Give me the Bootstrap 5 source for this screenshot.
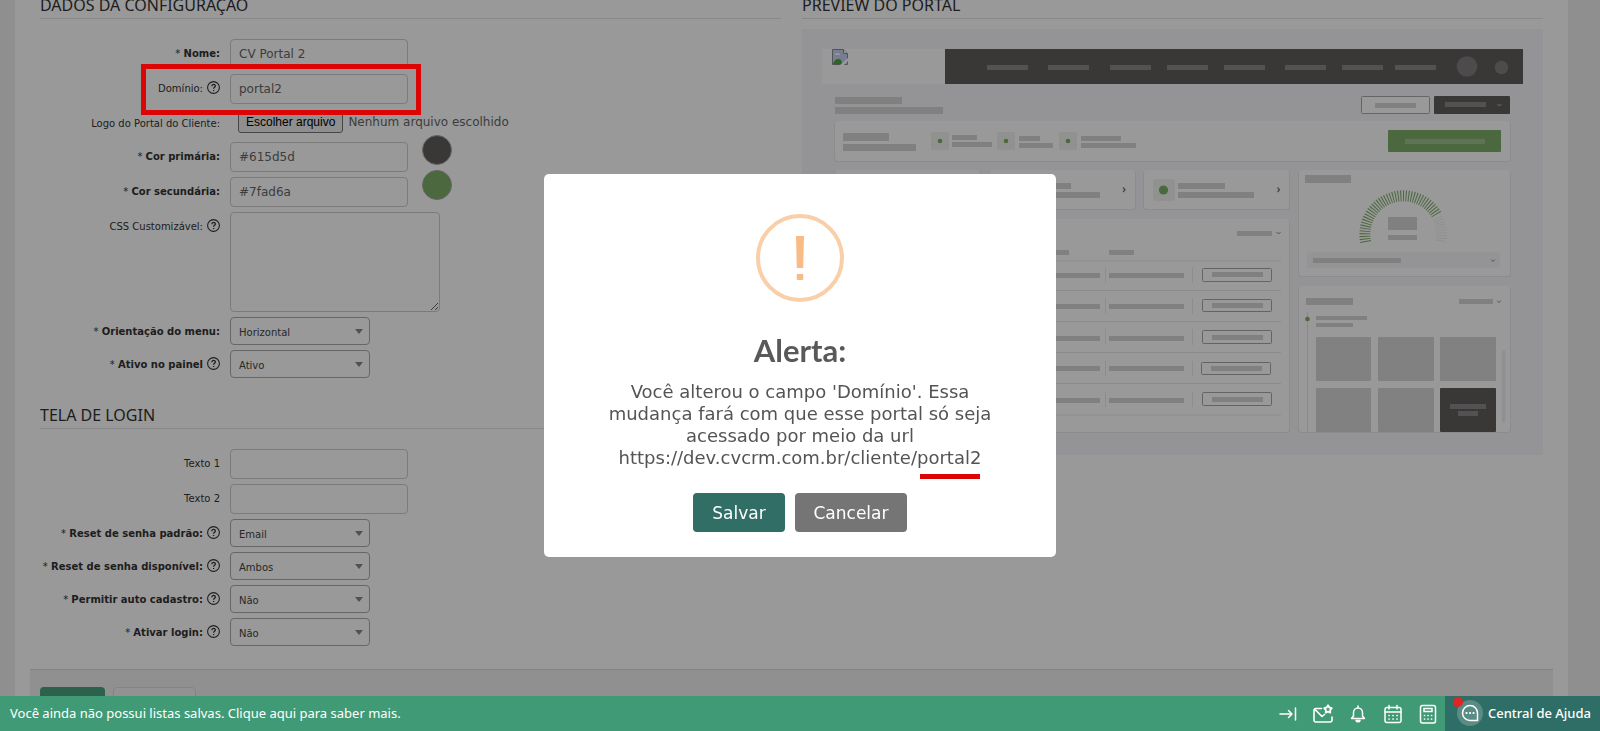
<!DOCTYPE html>
<html lang="pt-BR">
<head>
<meta charset="utf-8">
<meta name="viewport" content="width=device-width, initial-scale=1">
<title>Configuração do portal</title>
<link href="https://cdn.jsdelivr.net/npm/bootstrap@5.3.0/dist/css/bootstrap.min.css" rel="stylesheet">
<style>
  body { font-family: "DejaVu Sans", Verdana, sans-serif; font-size: 10px; line-height: 14px; color: #333; background: #efefef; overflow: hidden; }
  .sheet { background: #fff; margin: 0 32px 0 15px; }
  .sheet-body { padding: 0 25px; }
  .sheet-body > .row { --bs-gutter-x: 21px; }
  .section-title { font-family: "Noto Sans", Tahoma, sans-serif; font-size: 16px; font-weight: 400; line-height: 10px; padding-bottom: 8px; border-bottom: 1px solid #e3e3e3; margin: 0 0 20px; white-space: nowrap; }
  .section-gap { margin-top: 32px; }
  .field { display: flex; align-items: flex-start; gap: 10px; margin-bottom: 5px; position: relative; }
  .field-label { width: 180px; padding-top: 8px; text-align: right; white-space: nowrap; display: flex; justify-content: flex-end; gap: 4px; }
  .field-label b { font-weight: 700; }
  .help { width: 13px; height: 13px; flex: none; color: #333; margin-top: -1px; }
  .field .form-control { width: 178px; height: 30px; padding: 0 8px; font-size: 12px; line-height: 18px; color: #666; background: transparent; border: 1px solid #cdcdcd; border-radius: 4px; }
  .field textarea.form-control { width: 210px; height: 100px; resize: both; }
  .field .form-select { width: 140px; height: 28px; padding: 3px 24px 0 8px; font-size: 10px; line-height: 14px; color: #444; border: 1px solid #aaa; border-radius: 4px;
    background: url("data:image/svg+xml,%3Csvg xmlns='http://www.w3.org/2000/svg' viewBox='0 0 8 5'%3E%3Cpath fill='%23888' d='M0 0h8L4 5z'/%3E%3C/svg%3E") no-repeat right 6px center / 8px 5px; }
  .swatch { width: 30px; height: 30px; border-radius: 50%; border: 1px solid #aaa; margin: -7px 0 0 4px; padding: 0; }
  .file-row { height: 28px; }
  .file-pick { display: flex; align-items: center; gap: 5px; height: 22px; margin: 2px 0 0 8px; font-size: 12px; color: #666; white-space: nowrap; }
  .file-btn { font-family: "Liberation Sans", Arial, sans-serif; font-size: 12px; line-height: 19px; color: #000; background: #efefef; border: 1px solid #767676; border-radius: 3px; padding: 0 7px; }
  .callout-box { position: absolute; left: 101px; top: -10px; width: 280px; height: 51px; border: 5px solid #dc0505; z-index: 1070; }
  .preview { margin-top: 10px; display: block; width: 100%; height: auto; }
  .actions { background: #f1f1f1; border-top: 1px solid #d8d8d8; margin: 23px 15px 0; padding: 17px 10px 0; gap: 8px; flex: 1 0 auto; }
  .actions .btn { height: 32px; font-size: 12px; padding: 0; border-radius: 4px; }
  .btn-keep { width: 65px; background: #4aa37d; color: #fff; }
  .btn-back { width: 83px; background: #f4f4f4; border-color: #ddd; color: #666; }
  .modal-backdrop { --bs-backdrop-opacity: .4; }
  .modal-dialog { --bs-modal-width: 512px; }
  .modal-content { border: 0; border-radius: 5px; padding: 40px 56px 25px; align-items: center; color: #545454; text-align: center; }
  .alert-ring { width: 88px; height: 88px; border: 4px solid #facea8; border-radius: 50%; color: #f8bb86; }
  .alert-title { font-family: Lato, sans-serif; font-size: 31px; font-weight: 700; line-height: 36px; color: #595959; margin: 30px 0 13px; }
  .alert-text { font-size: 18px; line-height: 22px; margin: 0; }
  .marked { position: relative; }
  .marked::after { content: ""; position: absolute; left: 3px; bottom: -11px; width: 60px; height: 5px; background: #dc0505; }
  .alert-actions { gap: 10px; margin-top: 24px; }
  .alert-actions .btn { height: 39px; font-size: 17px; line-height: 24px; color: #fff; border: 0; border-radius: 4px; padding: 1px 0 0; }
  .btn-save { width: 92px; background: #306e66; }
  .btn-cancel { width: 112px; background: #757575; }
  .statusbar { z-index: 1080; height: 35px; background: #419a76; font-family: "Noto Sans", Tahoma, sans-serif; font-size: 13px; line-height: 18px; }
  .statusbar a { color: #fff; text-decoration: none; }
  .status-note { padding: 0 0 1px 10px; }
  .tools { gap: 15px; padding-right: 7px; }
  .tools button { border: 0; background: none; padding: 0; color: #fff; width: 20px; height: 20px; line-height: 0; }
  .help-center { width: 155px; background: #2f6e66; padding: 0 0 1px 12px; gap: 5px; font-weight: 500; }
  .chat { width: 26px; height: 26px; border-radius: 50%; background: #5a8b85; position: relative; }
  .chat i { position: absolute; left: -4px; top: -3px; width: 10px; height: 10px; border-radius: 50%; background: #e12424; }
</style>
</head>
<body>
<svg class="d-none" aria-hidden="true">
  <symbol id="q" viewBox="0 0 13 13"><circle cx="6.500" cy="6.500" r="5.900" fill="none" stroke="currentColor" stroke-width="1.100"/><path d="M4.800 5.200c0-2.300 3.500-2.300 3.500-.2 0 1.200-1.700 1.300-1.700 2.700M6.600 8.900v1.200" fill="none" stroke="currentColor" stroke-width="1.300"/></symbol>
  <symbol id="down" viewBox="0 0 5 4"><path d="M.5 1l2 2 2-2" fill="none" stroke="currentColor" stroke-width="1"/></symbol>
</svg>

<div class="d-flex flex-column vh-100">
<main class="sheet d-flex flex-column flex-grow-1">
  <div class="sheet-body">
    <div class="row">
      <form class="col-6">
        <h2 class="section-title">DADOS DA CONFIGURAÇÃO</h2>
        <div class="field"><label class="field-label" for="nome"><span>* <b>Nome:</b></span></label><input class="form-control" id="nome" type="text" value="CV Portal 2"></div>
        <div class="field"><label class="field-label" for="dominio"><span>Domínio:</span><svg class="help"><use href="#q"/></svg></label><input class="form-control" id="dominio" type="text" value="portal2"><span class="callout-box"></span></div>
        <div class="field file-row"><label class="field-label" for="logo">Logo do Portal do Cliente:</label><input class="visually-hidden" id="logo" type="file"><label class="file-pick" for="logo"><span class="file-btn">Escolher arquivo</span><span>Nenhum arquivo escolhido</span></label></div>
        <div class="field"><label class="field-label" for="cor1"><span>* <b>Cor primária:</b></span></label><input class="form-control" id="cor1" type="text" value="#615d5d"><button class="swatch" type="button" aria-label="Cor primária" style="background:#615d5d"></button></div>
        <div class="field"><label class="field-label" for="cor2"><span>* <b>Cor secundária:</b></span></label><input class="form-control" id="cor2" type="text" value="#7fad6a"><button class="swatch" type="button" aria-label="Cor secundária" style="background:#7fad6a"></button></div>
        <div class="field"><label class="field-label" for="css"><span>CSS Customizável:</span><svg class="help"><use href="#q"/></svg></label><textarea class="form-control" id="css"></textarea></div>
        <div class="field"><label class="field-label" for="menu"><span>* <b>Orientação do menu:</b></span></label><select class="form-select" id="menu"><option>Horizontal</option><option>Vertical</option></select></div>
        <div class="field mb-0"><label class="field-label" for="ativo"><span>* <b>Ativo no painel</b></span><svg class="help"><use href="#q"/></svg></label><select class="form-select" id="ativo"><option>Ativo</option><option>Inativo</option></select></div>

        <h2 class="section-title section-gap">TELA DE LOGIN</h2>
        <div class="field"><label class="field-label" for="t1">Texto 1</label><input class="form-control" id="t1" type="text"></div>
        <div class="field"><label class="field-label" for="t2">Texto 2</label><input class="form-control" id="t2" type="text"></div>
        <div class="field"><label class="field-label" for="reset"><span>* <b>Reset de senha padrão:</b></span><svg class="help"><use href="#q"/></svg></label><select class="form-select" id="reset"><option>Email</option></select></div>
        <div class="field"><label class="field-label" for="disp"><span>* <b>Reset de senha disponível:</b></span><svg class="help"><use href="#q"/></svg></label><select class="form-select" id="disp"><option>Ambos</option></select></div>
        <div class="field"><label class="field-label" for="auto"><span>* <b>Permitir auto cadastro:</b></span><svg class="help"><use href="#q"/></svg></label><select class="form-select" id="auto"><option>Não</option><option>Sim</option></select></div>
        <div class="field mb-0"><label class="field-label" for="login"><span>* <b>Ativar login:</b></span><svg class="help"><use href="#q"/></svg></label><select class="form-select" id="login"><option>Não</option><option>Sim</option></select></div>
      </form>

      <section class="col-6">
        <h2 class="section-title mb-0">PREVIEW DO PORTAL</h2>
        <svg class="preview" viewBox="802 29 741 426" role="img" aria-label="Preview do portal">
          <rect x="802" y="29" width="741" height="426" fill="#f7f7fa"/>
          <!-- header -->
          <rect x="822" y="49" width="123" height="35" fill="#fff"/>
          <g transform="translate(832 49)"><path d="M.5.5h11l4 4v11H.5z" fill="#c4d3f4" stroke="#8c8c8c"/><path d="M11.500.5v4h4" fill="#fff" stroke="#8c8c8c"/><path d="M3 6c0-2 2-2.500 3-1.500C8 4 8.500 6 8 6z" fill="#fff"/><path d="M1 15c1-4 4-5.500 6-5s3 2 3 5z" fill="#4ba83a"/><path d="M8 16l8-7v3l-4 4z" fill="#fff"/></g>
          <rect x="945" y="49" width="578" height="35" fill="#615d5d"/>
          <g fill="#8a8788"><path d="M987 65h41v5h-41zM1048 65h41v5h-41zM1110 65h41v5h-41zM1167 65h41v5h-41zM1224 65h41v5h-41zM1285 65h41v5h-41zM1342 65h41v5h-41zM1395 65h41v5h-41z"/><circle cx="1467" cy="66.500" r="10.300" opacity=".8"/><circle cx="1501.500" cy="67.500" r="6.700" opacity=".8"/></g>
          <!-- title line -->
          <path d="M835 97h67v7h-67zM835 107h108v7h-108z" fill="#d6d6d6"/>
          <rect x="1361.500" y="96.500" width="68" height="17" rx="1" fill="#fff" stroke="#aaa8a8"/><rect x="1375" y="103" width="41" height="5" fill="#d6d6d6"/>
          <rect x="1434" y="96" width="76" height="18" rx="1" fill="#615d5d"/><rect x="1445" y="102" width="41" height="5" fill="#8a8788"/><use href="#down" x="1497" y="103" width="5" height="4" color="#bbb"/>
          <!-- cards -->
          <g fill="#e9e9ee"><rect x="834" y="122" width="677" height="40" rx="3"/><rect x="834" y="171" width="147" height="39" rx="3"/><rect x="989" y="171" width="147" height="39" rx="3"/><rect x="1143" y="171" width="147" height="39" rx="3"/><rect x="834" y="220" width="456" height="213" rx="3"/><rect x="1298" y="171" width="213" height="106" rx="3"/><rect x="1298" y="287" width="213" height="146" rx="3"/></g>
          <g fill="#fff"><rect x="835" y="121" width="675" height="40" rx="3"/><rect x="835" y="170" width="145" height="39" rx="3"/><rect x="990" y="170" width="145" height="39" rx="3"/><rect x="1144" y="170" width="145" height="39" rx="3"/><rect x="835" y="219" width="454" height="213" rx="3"/><rect x="1299" y="170" width="211" height="106" rx="3"/><rect x="1299" y="286" width="211" height="146" rx="3"/></g>
          <!-- summary card -->
          <path d="M843 133h46v8h-46zM843 144h73v7h-73zM952 135h25v5h-25zM952 142h40v5h-40zM1019 136h21v5h-21zM1019 143h34v5h-34zM1081 136h40v5h-40zM1081 143h55v5h-55z" fill="#d6d6d6"/>
          <g fill="#f1f4ef"><rect x="931" y="132" width="18" height="18" rx="2"/><rect x="997" y="132" width="18" height="18" rx="2"/><rect x="1059" y="132" width="18" height="18" rx="2"/><rect x="999" y="179" width="22" height="22" rx="2"/><rect x="1153" y="179" width="22" height="22" rx="2"/></g>
          <g fill="#7fad6a"><circle cx="940" cy="141" r="2.300"/><circle cx="1006" cy="141" r="2.300"/><circle cx="1068" cy="141" r="2.300"/><circle cx="1163.500" cy="190" r="4.600"/><rect x="1388" y="130" width="113" height="22" rx="1"/></g>
          <rect x="1405" y="139" width="80" height="5" fill="#9fc28f"/>
          <!-- shortcuts -->
          <path d="M1024 183h47v6h-47zM1024 192h76v6h-76zM1178 183h47v6h-47zM1178 192h76v6h-76z" fill="#d6d6d6"/>
          <path d="M1123 187.500l2 2.300-2 2.300M1277.500 187.500l2 2.300-2 2.300" fill="none" stroke="#777" stroke-width="1.300"/>
          <!-- table -->
          <path d="M1237 231h35v5h-35zM1044 250h25v5h-25zM1109 250h25v5h-25z" fill="#d6d6d6"/><use href="#down" x="1276" y="231" width="5" height="4" color="#888"/>
          <path d="M845 261h436M845 290.500h436M845 321.500h436M845 352.500h436M845 383.500h436M845 415h436" stroke="#eaeaea"/>
          <path d="M1105.500 267v16m0 15v16m0 15v16m0 16v15m0 16v15M1192.500 267v16m0 15v16m0 15v16m0 16v15m0 16v15" stroke="#ececec"/>
          <path d="M1025 273h75v5h-75zM1109 273h75v5h-75zM1025 304h75v5h-75zM1109 304h75v5h-75zM1025 336h75v5h-75zM1109 336h75v5h-75zM1025 366h75v5h-75zM1109 366h75v5h-75zM1025 398h75v5h-75zM1109 398h75v5h-75zM1212 272h51v5h-51zM1212 303h51v5h-51zM1212 335h51v5h-51zM1211 366h51v5h-51zM1212 397h51v5h-51z" fill="#d6d6d6"/>
          <g fill="none" stroke="#a8a6a6"><rect x="1202.500" y="268.500" width="69" height="13" rx="1"/><rect x="1202.500" y="299.500" width="69" height="12" rx="1"/><rect x="1202.500" y="330.500" width="69" height="13" rx="1"/><rect x="1201.500" y="362.500" width="69" height="12" rx="1"/><rect x="1202.500" y="392.500" width="69" height="13" rx="1"/></g>
          <!-- gauge -->
          <path d="M1305 175h46v8h-46zM1388 217h29v13h-29zM1388 235h29v5h-29z" fill="#d6d6d6"/>
          <path d="M1365.700 242A38.500 38.500 0 0 1 1437 215.500" fill="none" stroke="#7fad6a" stroke-width="11" stroke-dasharray="1 1.600"/>
          <path d="M1437.500 217.500A38.500 38.500 0 0 1 1441 242" fill="none" stroke="#f0f0f0" stroke-width="11" stroke-dasharray="1 1.600"/>
          <rect x="1307" y="252.500" width="193" height="15.500" rx="2" fill="#f7f7fa"/><rect x="1313" y="258" width="88" height="5" fill="#d6d6d6"/><use href="#down" x="1490.500" y="258.500" width="5" height="4" color="#888"/>
          <!-- gallery -->
          <path d="M1307.500 312v120" stroke="#e6e6e6"/><circle cx="1307.500" cy="319" r="2.300" fill="#7fad6a"/>
          <path d="M1306 298h47v7h-47zM1459 299h34v5h-34zM1316 316h51v4h-51zM1316 323h37v4h-37z" fill="#d6d6d6"/><use href="#down" x="1496.500" y="299.500" width="5" height="4" color="#888"/>
          <g fill="#d8d8d8"><rect x="1316" y="337" width="55" height="44" rx="1"/><rect x="1378" y="337" width="56" height="44" rx="1"/><rect x="1440" y="337" width="56" height="44" rx="1"/><rect x="1316" y="388" width="55" height="44" rx="1"/><rect x="1378" y="388" width="56" height="44" rx="1"/></g>
          <rect x="1440" y="388" width="56" height="44" rx="1" fill="#615d5d"/><path d="M1450 404h36v5h-36zM1458 411h20v5h-20z" fill="#8a8788"/>
          <rect x="1502" y="350" width="3.500" height="73" rx="1.700" fill="#f1f1f6"/>
        </svg>
      </section>
    </div>
  </div>
  <div class="actions d-flex align-items-start">
    <button class="btn btn-keep" type="button" aria-label="Salvar"></button>
    <button class="btn btn-back" type="button" aria-label="Cancelar"></button>
  </div>
</main>
</div>

<div class="modal-backdrop show"></div>
<div class="modal d-block" role="dialog" aria-labelledby="alerta">
  <div class="modal-dialog modal-dialog-centered">
    <div class="modal-content">
      <div class="alert-ring d-flex align-items-center justify-content-center">
        <svg width="8" height="44" viewBox="0 0 8 44" fill="currentColor"><path d="M0 0h8l-.8 32H.8zM.8 38h6.400v6H.8z"/></svg>
      </div>
      <h1 class="alert-title" id="alerta">Alerta:</h1>
      <p class="alert-text">Você alterou o campo 'Domínio'. Essa mudança fará com que esse portal só seja acessado por meio da url https://dev.cvcrm.com.br/cliente/<span class="marked">portal2</span></p>
      <div class="alert-actions d-flex">
        <button class="btn btn-save" type="button">Salvar</button>
        <button class="btn btn-cancel" type="button">Cancelar</button>
      </div>
    </div>
  </div>
</div>

<footer class="statusbar fixed-bottom d-flex align-items-stretch">
  <a class="status-note d-flex align-items-center me-auto" href="#">Você ainda não possui listas salvas. Clique aqui para saber mais.</a>
  <div class="tools d-flex align-items-center">
    <button type="button" aria-label="Recolher"><svg width="20" height="20" viewBox="0 0 20 20" fill="none" stroke="currentColor" stroke-width="1.500" stroke-linecap="round" stroke-linejoin="round"><path d="M2 10h12M10.500 6.500L14 10l-3.500 3.500M17.500 4v12"/></svg></button>
    <button type="button" aria-label="Mensagens"><svg width="20" height="20" viewBox="0 0 20 20" fill="none" stroke="currentColor" stroke-width="1.600" stroke-linecap="round" stroke-linejoin="round"><path d="M8.500 4.500H3a2 2 0 0 0-2 2V16a2 2 0 0 0 2 2h14a2 2 0 0 0 2-2v-3M1.500 5l7.500 7.500 2.500-2"/><path d="M15 1.300l1.300 2.200 2.500.6-1.700 2 .2 2.600-2.300-1-2.300 1 .2-2.600-1.700-2 2.500-.6z" stroke-width="1.800"/></svg></button>
    <button type="button" aria-label="Notificações"><svg width="20" height="20" viewBox="0 0 20 20" fill="none" stroke="currentColor" stroke-width="1.500" stroke-linecap="round" stroke-linejoin="round"><path d="M10 2v1.500M5.500 12V8.500a4.500 4.500 0 0 1 9 0V12l2 2.500h-13zM8 16.500c.5 1.800 3.500 1.800 4 0z"/></svg></button>
    <button type="button" aria-label="Calendário"><svg width="20" height="20" viewBox="0 0 20 20" fill="none" stroke="currentColor" stroke-width="1.500" stroke-linecap="round"><rect x="2" y="3.500" width="16" height="15" rx="2"/><path d="M2 8h16M6 1.500v3.500M14 1.500v3.500"/><path d="M6 11.500h.1M10 11.500h.1M14 11.500h.1M6 15h.1M10 15h.1M14 15h.1" stroke-width="1.700"/></svg></button>
    <button type="button" aria-label="Calculadora"><svg width="20" height="20" viewBox="0 0 20 20" fill="none" stroke="currentColor" stroke-width="1.500" stroke-linecap="round"><rect x="2.500" y="1.500" width="15" height="17.500" rx="2"/><rect x="6" y="4.500" width="8" height="3"/><path d="M6.500 11.500h.1M10 11.500h.1M13.500 11.500h.1M6.500 15h.1M10 15h.1M13.500 15h.1" stroke-width="1.700"/></svg></button>
  </div>
  <a class="help-center d-flex align-items-center text-nowrap" href="#"><span class="chat flex-shrink-0 d-flex align-items-center justify-content-center"><svg width="18" height="18" viewBox="0 0 18 18" fill="none" stroke="#fff" stroke-width="1.500"><path d="M16.500 16.500V9A7.500 7.500 0 1 0 9 16.500z" stroke-linejoin="round"/><path d="M5.500 9h.1M9 9h.1M12.500 9h.1" stroke-width="2.200" stroke-linecap="round"/></svg><i></i></span>Central de Ajuda</a>
</footer>
<script src="https://cdn.jsdelivr.net/npm/bootstrap@5.3.0/dist/js/bootstrap.bundle.min.js"></script>
</body>
</html>
